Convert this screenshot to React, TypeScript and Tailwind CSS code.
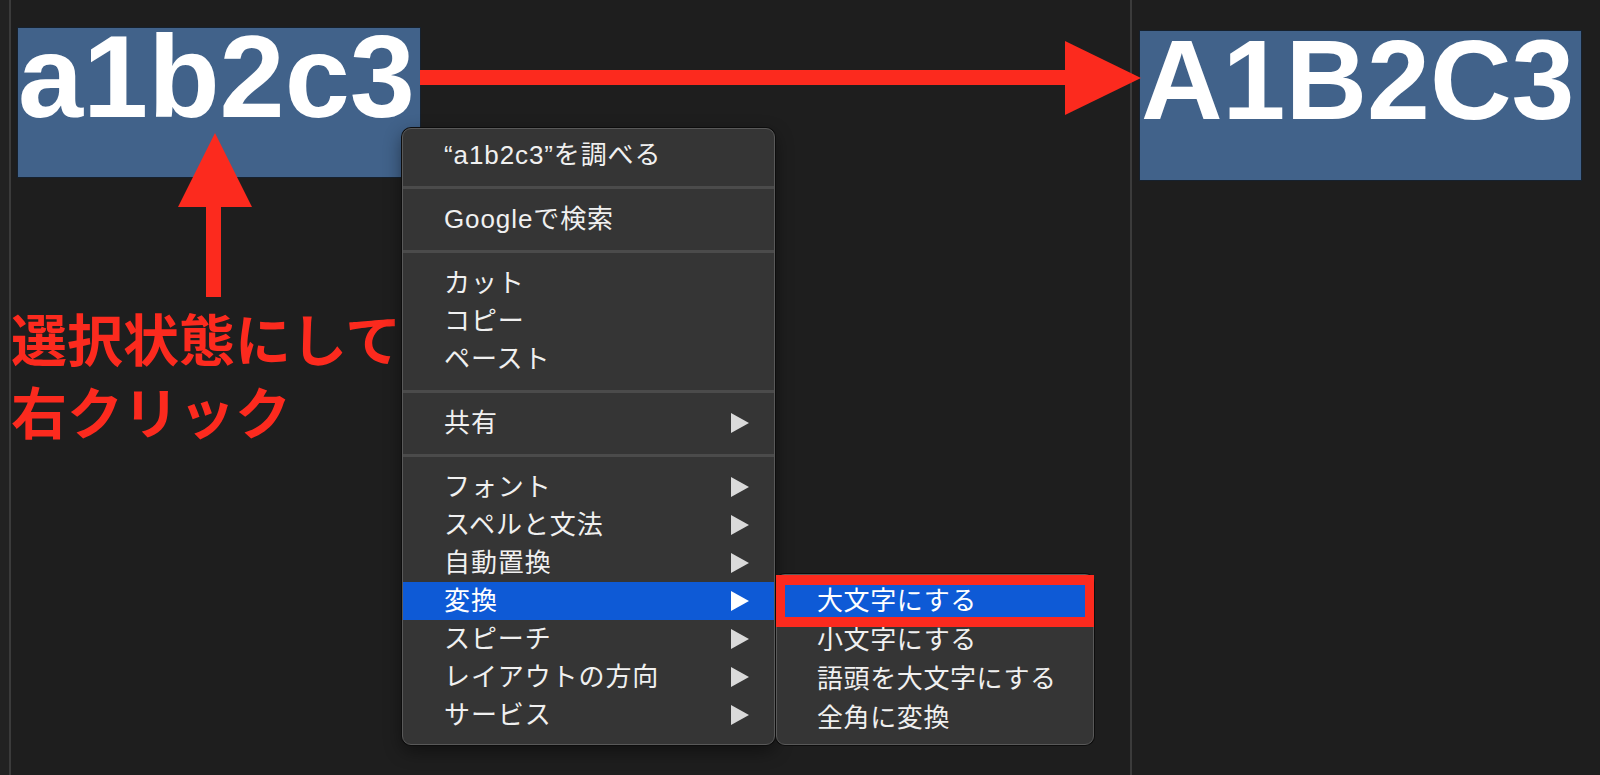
import React from 'react';

const RED = '#fc2a1e';

const menuFont = { fontFamily: '"Liberation Sans", "Noto Sans CJK JP", sans-serif' };

type Row = { label: string; sub?: boolean; active?: boolean } | 'sep';

const mainRows: Row[] = [
  { label: '“a1b2c3”を調べる' },
  'sep',
  { label: 'Googleで検索' },
  'sep',
  { label: 'カット' },
  { label: 'コピー' },
  { label: 'ペースト' },
  'sep',
  { label: '共有', sub: true },
  'sep',
  { label: 'フォント', sub: true },
  { label: 'スペルと文法', sub: true },
  { label: '自動置換', sub: true },
  { label: '変換', sub: true, active: true },
  { label: 'スピーチ', sub: true },
  { label: 'レイアウトの方向', sub: true },
  { label: 'サービス', sub: true },
];

const subRows = ['大文字にする', '小文字にする', '語頭を大文字にする', '全角に変換'];

const Tri: React.FC<{ active?: boolean }> = ({ active }) => (
  <svg width="18" height="20" viewBox="0 0 18 20">
    <polygon points="0,0 18,10 0,20" fill={active ? '#ffffff' : '#dadada'} />
  </svg>
);

const ContextMenu: React.FC = () => (
  <div
    className="absolute left-[402px] top-[128px] w-[373px] h-[617px] bg-[#353535] border border-[#595959] rounded-[9px] shadow-[0_0_0_1px_#0d0d0d,0_6px_18px_rgba(0,0,0,0.45)] pt-[7px] flex flex-col text-[26px] tracking-[0.9px] text-[#f0f0f0]"
    style={menuFont}
  >
    {mainRows.map((row, i) =>
      row === 'sep' ? (
        <div key={i} className="h-[26px] flex items-center">
          <div className="h-[3px] w-full bg-[#4b4b4b]" />
        </div>
      ) : (
        <div
          key={i}
          className={`h-[38px] flex items-center justify-between pl-[41px] pr-[25px] ${
            row.active ? 'bg-[#0e5ad6] text-white' : ''
          }`}
        >
          <span>{row.label}</span>
          {row.sub && <Tri active={row.active} />}
        </div>
      )
    )}
  </div>
);

const SubMenu: React.FC = () => (
  <div
    className="absolute left-[776px] top-[574px] w-[318px] h-[171px] bg-[#353535] border border-[#595959] rounded-[9px] shadow-[0_0_0_1px_#0d0d0d] pt-[7px] flex flex-col text-[26px] tracking-[0.6px] text-[#f0f0f0]"
    style={menuFont}
  >
    {subRows.map((label, i) => (
      <div
        key={label}
        className={`h-[39px] flex items-center pl-[40px] ${i === 0 ? 'bg-[#0e5ad6] text-white' : ''}`}
      >
        {label}
      </div>
    ))}
  </div>
);

const Arrows: React.FC = () => (
  <svg className="absolute inset-0 pointer-events-none" width="1600" height="775" viewBox="0 0 1600 775">
    <rect x="420" y="70" width="647" height="15" fill={RED} />
    <polygon points="1065,41 1141,78 1065,115" fill={RED} />
    <polygon points="215,133 252,207 178,207" fill={RED} />
    <rect x="206" y="206" width="15" height="91" fill={RED} />
  </svg>
);

export default function App() {
  return (
    <div className="relative w-[1600px] h-[775px] overflow-hidden bg-[#1e1e1e] flex">
      <div className="w-[9px] bg-[#222222]" />
      <div className="w-[2px] bg-[#3b3b3b]" />

      <div className="w-[1119px] flex flex-col">
        <div
          className="ml-[7px] mt-[28px] w-[402px] h-[149px] bg-[#41628a] ring-1 ring-[#16212e] text-white font-bold text-[117px] leading-[97px]"
          style={{ fontFamily: '"Liberation Sans", Arial, sans-serif' }}
        >
          a1b2c3
        </div>
        <div
          className="mt-[123px] text-[56px] leading-[73px] font-bold text-[#fc2a1e]"
          style={{ fontFamily: '"Noto Sans CJK JP", sans-serif' }}
        >
          選択状態にして
          <br />
          右クリック
        </div>
      </div>

      <div className="w-[2px] bg-[#3b3b3b]" />

      <div className="flex-1 pl-[8px] pt-[31px]">
        <div
          className="w-[441px] h-[149px] bg-[#41628a] ring-1 ring-[#16212e] text-white font-bold text-[113px] leading-[98px] pl-[1px]"
          style={{ fontFamily: '"Liberation Sans", Arial, sans-serif' }}
        >
          A1B2C3
        </div>
      </div>

      <ContextMenu />
      <SubMenu />
      <div className="absolute left-[776px] top-[575px] w-[318px] h-[52px] border-x-[9px] border-y-[10px] border-[#fc2a1e]" />
      <Arrows />
    </div>
  );
}
